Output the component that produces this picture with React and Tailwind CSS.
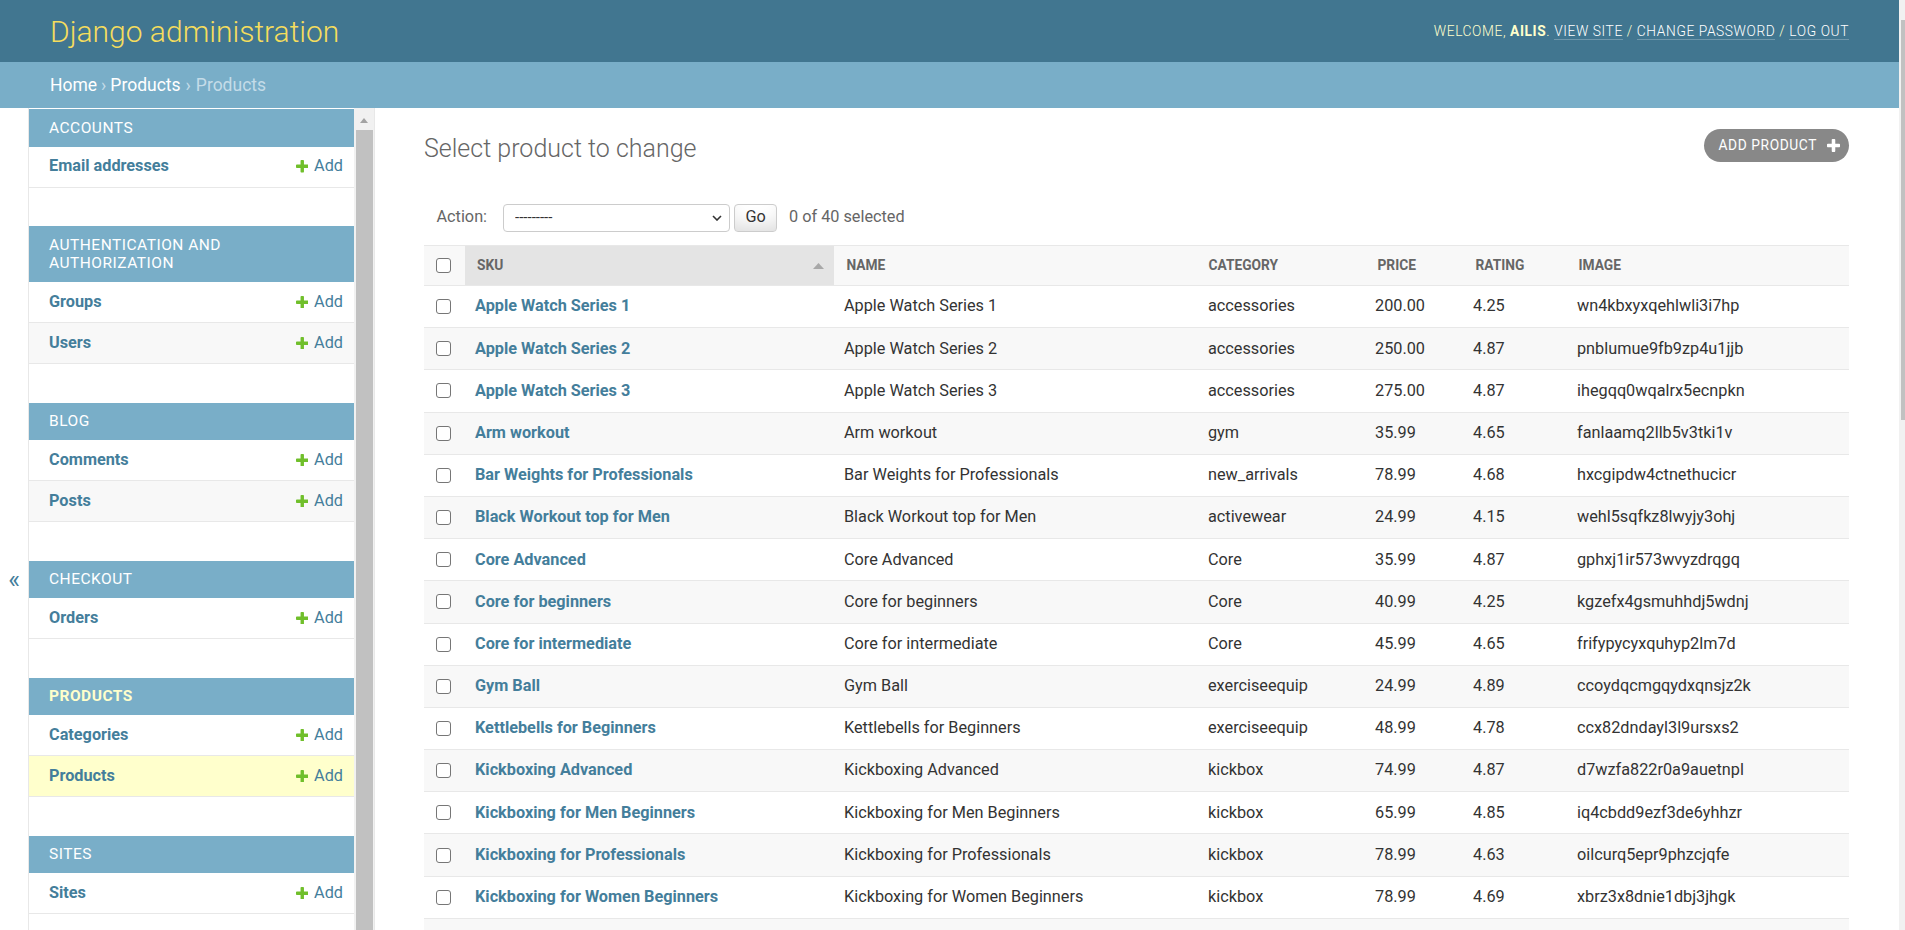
import { useState } from 'react'

const PLUS =
  'M1600 736v192q0 40-28 68t-68 28h-416v416q0 40-28 68t-68 28h-192q-40 0-68-28t-28-68v-416h-416q-40 0-68-28t-28-68v-192q0-40 28-68t68-28h416v-416q0-40 28-68t68-28h192q40 0 68 28t28 68v416h416q40 0 68 28t28 68z'

const MODULES = [
  { name: 'Accounts', models: ['Email addresses'] },
  { name: 'Authentication and Authorization', models: ['Groups', 'Users'] },
  { name: 'Blog', models: ['Comments', 'Posts'] },
  { name: 'Checkout', models: ['Orders'] },
  { name: 'Products', models: ['Categories', 'Products'], current: true },
  { name: 'Sites', models: ['Sites'] },
]

const PRODUCTS = [
  ['Apple Watch Series 1', 'accessories', '200.00', '4.25', 'wn4kbxyxqehlwli3i7hp'],
  ['Apple Watch Series 2', 'accessories', '250.00', '4.87', 'pnblumue9fb9zp4u1jjb'],
  ['Apple Watch Series 3', 'accessories', '275.00', '4.87', 'ihegqq0wqalrx5ecnpkn'],
  ['Arm workout', 'gym', '35.99', '4.65', 'fanlaamq2llb5v3tki1v'],
  ['Bar Weights for Professionals', 'new_arrivals', '78.99', '4.68', 'hxcgipdw4ctnethucicr'],
  ['Black Workout top for Men', 'activewear', '24.99', '4.15', 'wehl5sqfkz8lwyjy3ohj'],
  ['Core Advanced', 'Core', '35.99', '4.87', 'gphxj1ir573wvyzdrqgq'],
  ['Core for beginners', 'Core', '40.99', '4.25', 'kgzefx4gsmuhhdj5wdnj'],
  ['Core for intermediate', 'Core', '45.99', '4.65', 'frifypycyxquhyp2lm7d'],
  ['Gym Ball', 'exerciseequip', '24.99', '4.89', 'ccoydqcmgqydxqnsjz2k'],
  ['Kettlebells for Beginners', 'exerciseequip', '48.99', '4.78', 'ccx82dndayl3l9ursxs2'],
  ['Kickboxing Advanced', 'kickbox', '74.99', '4.87', 'd7wzfa822r0a9auetnpl'],
  ['Kickboxing for Men Beginners', 'kickbox', '65.99', '4.85', 'iq4cbdd9ezf3de6yhhzr'],
  ['Kickboxing for Professionals', 'kickbox', '78.99', '4.63', 'oilcurq5epr9phzcjqfe'],
  ['Kickboxing for Women Beginners', 'kickbox', '78.99', '4.69', 'xbrz3x8dnie1dbj3jhgk'],
]

const COLS = 'grid grid-cols-[41px_369px_362px_169px_98px_103px_1fr]'

function Plus({ className }) {
  return (
    <svg viewBox="192 128 1408 1408" className={className} aria-hidden="true">
      <path d={PLUS} fill="currentColor" />
    </svg>
  )
}

function Checkbox() {
  return <input type="checkbox" className="appearance-none w-[15px] h-[15px] border border-[#767676] rounded-[3px] bg-white block" />
}

function Sidebar() {
  return (
    <div className="w-[346px] shrink-0 border-r border-[#e8e8e8] flex">
      <div className="flex-1 min-w-0 pt-px">
        {MODULES.map((mod) => (
          <div key={mod.name} className="mb-[38.5px]">
            <div className={`bg-[#79aec8] pl-5 pr-[16px] py-[9.5px] leading-[18.5px] text-[15.5px] uppercase tracking-[0.5px] ${mod.current ? 'text-[#ffc] font-bold' : 'text-white'}`}>
              {mod.name}
            </div>
            {mod.models.map((model, i) => {
              const active = mod.current && model === 'Products'
              return (
                <div key={model} className={`h-[41px] border-b border-[#e8e8e8] flex items-center justify-between pl-5 pr-[11px] ${active ? 'bg-[#ffc]' : i % 2 ? 'bg-[#f8f8f8]' : 'bg-white'}`}>
                  <span className="text-[16.25px] font-bold text-[#447e9b]">{model}</span>
                  <span className="flex items-center gap-[6px] text-[16.25px] text-[#447e9b]">
                    <Plus className="w-[12.5px] h-[12.5px] text-[#70bf2b]" />
                    Add
                  </span>
                </div>
              )
            })}
          </div>
        ))}
      </div>
      <div className="w-[20px] bg-[#f1f1f1] flex flex-col items-center">
        <svg viewBox="0 0 8 5" className="w-[8px] h-[5px] mt-[10px] text-[#a3a3a3]">
          <polygon points="0,5 4,0 8,5" fill="currentColor" />
        </svg>
        <div className="w-[17px] flex-1 mt-[7px] bg-[#c1c1c1]" />
      </div>
    </div>
  )
}

export default function App() {
  const [action, setAction] = useState('')

  return (
    <div className="h-[930px] w-[1905px] overflow-hidden flex bg-white font-['Roboto',sans-serif] text-[#333]">
      <div className="flex-1 min-w-0 flex flex-col">
        <header className="h-[62px] shrink-0 bg-[#417690] px-[50px] flex items-center justify-between">
          <h1 className="text-[30px] font-light text-[#f5dd5d] leading-none pt-[1px]">Django administration</h1>
          <div className="text-[13.75px] font-light uppercase tracking-[0.6px] text-[#ffc]">
            Welcome, <strong className="font-bold">ailis</strong>.{' '}
            <a className="text-white border-b border-white/25">View site</a> /{' '}
            <a className="text-white border-b border-white/25">Change password</a> /{' '}
            <a className="text-white border-b border-white/25">Log out</a>
          </div>
        </header>

        <div className="h-[46px] shrink-0 bg-[#79aec8] px-[50px] pt-[1px] flex items-center text-[17.5px] text-[#c4dce8]">
          <a className="text-white">Home</a>
          <span className="mx-[4px]">›</span>
          <a className="text-white">Products</a>
          <span className="mx-[5px]">›</span>
          <span>Products</span>
        </div>

        <div className="flex flex-1 min-h-0">
          <button className="w-[29px] shrink-0 border-r border-[#e8e8e8] bg-white flex justify-center pt-[459px] text-[25px] leading-none text-[#447e9b]">
            «
          </button>

          <Sidebar />

          <main className="flex-1 min-w-0 pl-[49px] pr-[50px] pt-[26px]">
            <div className="flex items-start justify-between mb-[26px]">
              <h2 className="text-[25px] font-light text-[#666] leading-[30px]">Select product to change</h2>
              <a className="-mt-[5px] h-[33px] rounded-full bg-[#888] pl-[14px] pr-[9px] flex items-center gap-[10px] text-[13.75px] uppercase tracking-[0.6px] text-white">
                Add product
                <Plus className="w-[13px] h-[13px] text-white" />
              </a>
            </div>

            <div className="py-[12.5px] pl-[12.5px] flex items-center h-[55px]">
              <span className="text-[16.25px] text-[#666]">Action:</span>
              <div className="relative ml-[16px]">
                <select value={action} onChange={(e) => setAction(e.target.value)} className="appearance-none w-[227px] h-[28px] border border-[#ccc] rounded-[4px] bg-white pl-[11px] text-[15px] text-[#333]">
                  <option value="">---------</option>
                  <option value="delete_selected">Delete selected products</option>
                </select>
                <svg viewBox="0 0 10 6" className="absolute right-[8px] top-[11px] w-[10px] h-[6px] pointer-events-none">
                  <polyline points="1,1 5,5 9,1" fill="none" stroke="#333" strokeWidth="1.6" />
                </svg>
              </div>
              <button className="ml-[4px] w-[43px] h-[28px] border border-[#ccc] rounded-[4px] bg-white shadow-[inset_0_-15px_20px_-10px_rgba(0,0,0,0.15)] text-[16.25px] text-[#333] leading-none">
                Go
              </button>
              <span className="ml-[12px] text-[16.25px] text-[#666]">0 of 40 selected</span>
            </div>

            <div>
              <div className={`${COLS} h-[41px] bg-[#f8f8f8] border-y border-[#e8e8e8] text-[13.75px] font-bold uppercase text-[#666]`}>
                <div className="flex items-center pl-[12px]"><Checkbox /></div>
                <div className="bg-[#e4e4e4] flex items-center justify-between pl-[12px] pr-[10px]">
                  <span>SKU</span>
                  <svg viewBox="0 0 11 6" className="w-[11px] h-[6px] text-[#a8a8a8]">
                    <polygon points="0,6 5.5,0 11,6" fill="currentColor" />
                  </svg>
                </div>
                <div className="flex items-center pl-[12.5px]">Name</div>
                <div className="flex items-center pl-[12.5px]">Category</div>
                <div className="flex items-center pl-[12.5px]">Price</div>
                <div className="flex items-center pl-[12.5px]">Rating</div>
                <div className="flex items-center pl-[12.5px]">Image</div>
              </div>

              {PRODUCTS.map(([name, category, price, rating, image], i) => (
                <div key={name} className={`${COLS} h-[42.2px] border-b border-[#e8e8e8] items-center text-[16.25px] ${i % 2 ? 'bg-[#f8f8f8]' : 'bg-white'}`}>
                  <div className="pl-[12px]"><Checkbox /></div>
                  <a className="pl-[10px] font-bold text-[#447e9b] truncate">{name}</a>
                  <div className="pl-[10px] truncate">{name}</div>
                  <div className="pl-[12px]">{category}</div>
                  <div className="pl-[10px]">{price}</div>
                  <div className="pl-[10px]">{rating}</div>
                  <div className="pl-[11px]">{image}</div>
                </div>
              ))}
              <div className={`${COLS} h-[42.2px] bg-[#f8f8f8]`} />
            </div>
          </main>
        </div>
      </div>

      <div className="w-[6px] shrink-0 bg-[#f1f1f1] pt-[20px] pl-[2px]">
        <div className="h-[400px] w-[4px] bg-[#c1c1c1]" />
      </div>
    </div>
  )
}
